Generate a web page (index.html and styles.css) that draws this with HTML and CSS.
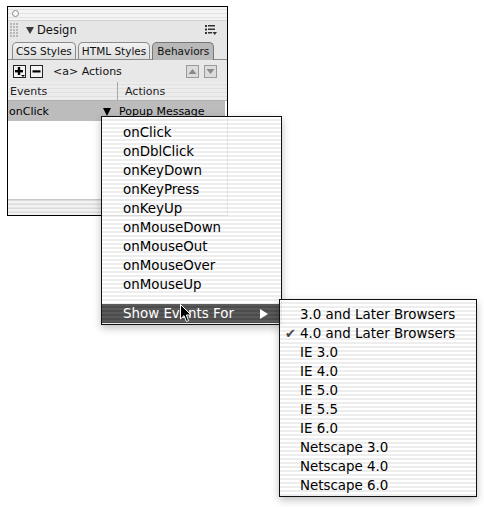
FILE: index.html
```html
<!DOCTYPE html>
<html>
<head>
<meta charset="utf-8">
<link rel="stylesheet" href="styles.css">
</head>
<body>
<div class="page">
  <div class="panel">
    <div class="titlebar"><span class="closebtn"></span></div>
    <div class="designrow">
      <span class="grip"></span>
      <span class="tri-down"></span>
      <span class="design-label">Design</span>
      <svg class="opts" width="12" height="10" viewBox="0 0 12 10">
        <rect x="0" y="0" width="2" height="2" fill="#333"/>
        <rect x="3" y="0" width="7" height="1.5" fill="#333"/>
        <rect x="0" y="3.5" width="2" height="2" fill="#333"/>
        <rect x="3" y="3.5" width="7" height="1.5" fill="#333"/>
        <rect x="0" y="7" width="2" height="2" fill="#333"/>
        <rect x="3" y="7" width="4" height="1.5" fill="#333"/>
        <path d="M7.5 7 L12 7 L9.75 10 Z" fill="#333"/>
      </svg>
    </div>
    <div class="tabs">
      <div class="tab">CSS Styles</div>
      <div class="tab">HTML Styles</div>
      <div class="tab active">Behaviors</div>
    </div>
    <div class="toolbar">
      <span class="tbtn plus">
        <svg width="11" height="11" viewBox="0 0 11 11"><rect x="1" y="4" width="8" height="2.4" fill="#000"/><rect x="3.8" y="1" width="2.4" height="8" fill="#000"/><path d="M7 9 L11 9 L9 11 Z" fill="#000"/></svg>
      </span>
      <span class="tbtn minus">
        <svg width="11" height="11" viewBox="0 0 11 11"><rect x="1.5" y="4.3" width="8" height="2.2" fill="#000"/></svg>
      </span>
      <span class="tag-label">&lt;a&gt; Actions</span>
      <span class="spacer"></span>
      <span class="abtn"><svg width="11" height="11" viewBox="0 0 11 11"><path d="M1.5 8 L9.5 8 L5.5 3 Z" fill="#8a8a8a"/></svg></span>
      <span class="abtn"><svg width="11" height="11" viewBox="0 0 11 11"><path d="M1.5 3 L9.5 3 L5.5 8 Z" fill="#8a8a8a"/></svg></span>
    </div>
    <div class="header">
      <div class="col-events">Events</div>
      <div class="col-actions">Actions</div>
    </div>
    <div class="row-sel">
      <div class="col-events">onClick<span class="row-tri"></span></div>
      <div class="col-actions">Popup Message</div>
    </div>
    <div class="list-area"></div>
    <div class="statusbar"></div>
  </div>

  <div class="menu menu-events">
    <div class="mi">onClick</div>
    <div class="mi">onDblClick</div>
    <div class="mi">onKeyDown</div>
    <div class="mi">onKeyPress</div>
    <div class="mi">onKeyUp</div>
    <div class="mi">onMouseDown</div>
    <div class="mi">onMouseOut</div>
    <div class="mi">onMouseOver</div>
    <div class="mi">onMouseUp</div>
    <div class="msep"></div>
    <div class="mi hl">Show Events For<span class="sub-tri"></span></div>
  </div>

  <div class="menu menu-browsers">
    <div class="mi">3.0 and Later Browsers</div>
    <div class="mi"><span class="check">✔</span>4.0 and Later Browsers</div>
    <div class="mi">IE 3.0</div>
    <div class="mi">IE 4.0</div>
    <div class="mi">IE 5.0</div>
    <div class="mi">IE 5.5</div>
    <div class="mi">IE 6.0</div>
    <div class="mi">Netscape 3.0</div>
    <div class="mi">Netscape 4.0</div>
    <div class="mi">Netscape 6.0</div>
  </div>

  <svg class="cursor" width="12" height="19" viewBox="0 0 12 19">
    <path d="M0.5 0.5 L0.5 15 L4 11.6 L6.4 17.5 L8.6 16.6 L6.3 11 L11 11 Z" fill="#000" stroke="#fff" stroke-width="1"/>
  </svg>
</div>
</body>
</html>
```

FILE: styles.css
```css
html, body {
  margin: 0;
  padding: 0;
  background: #fff;
}
.page {
  position: relative;
  width: 484px;
  height: 507px;
  box-sizing: border-box;
  padding: 6px 0 0 7px;
  font-family: "DejaVu Sans", "Liberation Sans", sans-serif;
  color: #000;
}
.panel {
  width: 219px;
  border: 1px solid #000;
  background: #fff;
  display: flex;
  flex-direction: column;
  font-size: 11px;
}
.titlebar {
  height: 13px;
  background: repeating-linear-gradient(to bottom, #f4f4f4 0 2px, #e2e2e2 2px 3px, #f4f4f4 3px 4px);
  display: flex;
  align-items: center;
  padding-left: 4px;
}
.closebtn {
  width: 5px;
  height: 5px;
  border: 1px solid #8c8c8c;
  border-radius: 50%;
  background: #fafafa;
}
.designrow {
  height: 19px;
  background: #e6e6e6;
  display: flex;
  align-items: center;
  border-top: 1px solid #d0d0d0;
  box-sizing: border-box;
}
.grip {
  width: 9px;
  height: 15px;
  margin-left: 2px;
  background-image: radial-gradient(circle at 1px 1px, #b8b8b8 0.9px, transparent 1.1px);
  background-size: 3px 3px;
}
.tri-down {
  width: 0;
  height: 0;
  margin-left: 7px;
  border-left: 4px solid transparent;
  border-right: 4px solid transparent;
  border-top: 7px solid #3a3a3a;
}
.design-label {
  margin-left: 3px;
  font-size: 11.5px;
  color: #111;
}
.opts {
  margin-left: auto;
  margin-right: 10px;
}
.tabs {
  height: 21px;
  background: #e6e6e6;
  display: flex;
  align-items: flex-end;
  gap: 2px;
  padding-left: 4px;
  border-bottom: 1px solid #8a8a8a;
  box-sizing: border-box;
}
.tab {
  height: 16px;
  padding: 0 3px;
  border: 1px solid #8a8a8a;
  border-bottom: none;
  border-radius: 5px 5px 0 0;
  background: linear-gradient(to bottom, #f2f2f2, #dedede);
  font-size: 10.5px;
  line-height: 17px;
  color: #111;
  white-space: nowrap;
}
.tab.active {
  padding: 0 4px;
  background: #b9b9b9;
  border-color: #777;
  margin-bottom: -1px;
  height: 17px;
}
.toolbar {
  height: 22px;
  background: #e8e8e8;
  display: flex;
  align-items: center;
  padding: 1px 10px 0 5px;
  box-sizing: border-box;
}
.tbtn {
  width: 11px;
  height: 11px;
  border: 1px solid #222;
  background: #f4f4f4;
  display: flex;
}
.tbtn.minus { margin-left: 4px; }
.tag-label {
  margin-left: 10px;
  font-size: 11px;
  color: #111;
}
.spacer { flex: 1; }
.abtn {
  width: 11px;
  height: 11px;
  border: 1px solid #9a9a9a;
  background: #dcdcdc;
  display: flex;
  margin-left: 5px;
}
.header {
  height: 18px;
  display: flex;
  background: repeating-linear-gradient(to bottom, #ececec 0 2px, #e0e0e0 2px 3px, #ececec 3px 4px);
  border-bottom: 1px solid #b0b0b0;
  color: #222;
}
.col-events {
  width: 107px;
  padding-left: 2px;
  line-height: 20px;
  position: relative;
}
.header .col-events {
  border-right: 1px solid #a8a8a8;
}
.col-actions {
  padding-left: 7px;
  line-height: 20px;
}
.row-sel {
  height: 20px;
  display: flex;
  background: #bcbcbc;
  margin-right: 2px;
}
.row-sel .col-events {
  width: 108px;
  padding-left: 1px;
  line-height: 21px;
}
.row-sel .col-actions {
  padding-left: 2px;
  line-height: 21px;
}
.row-tri {
  position: absolute;
  left: 95px;
  top: 7px;
  width: 0;
  height: 0;
  border-left: 4px solid transparent;
  border-right: 4px solid transparent;
  border-top: 8px solid #000;
}
.list-area {
  height: 78px;
}
.statusbar {
  height: 16px;
  background: repeating-linear-gradient(to bottom, #dcdcdc 0 1px, #f2f2f2 1px 3px, #e6e6e6 3px 4px);
  border-top: 1px solid #c8c8c8;
  box-sizing: border-box;
}
.menu {
  position: absolute;
  border: 1px solid #111;
  background: repeating-linear-gradient(to bottom, rgba(255,255,255,0.93) 0 2px, rgba(236,236,236,0.93) 2px 4px);
  font-size: 13.4px;
  box-sizing: border-box;
  box-shadow: 0 3px 8px rgba(0,0,0,0.25);
}
.menu-events {
  left: 101px;
  top: 116px;
  width: 181px;
  height: 209px;
  padding-top: 6px;
}
.menu-browsers {
  left: 279px;
  top: 299px;
  width: 198px;
  height: 198px;
  padding-top: 5px;
}
.mi {
  height: 19px;
  line-height: 19px;
  padding-left: 21px;
  position: relative;
  white-space: nowrap;
}
.menu-browsers .mi { padding-left: 20px; }
.msep { height: 10px; }
.mi.hl {
  color: #fff;
  background: repeating-linear-gradient(to bottom, #5a5a5a 0 2px, #4c4c4c 2px 4px);
}
.sub-tri {
  position: absolute;
  left: 158px;
  top: 5px;
  width: 0;
  height: 0;
  border-top: 5px solid transparent;
  border-bottom: 5px solid transparent;
  border-left: 8px solid #fff;
}
.check {
  position: absolute;
  left: 5px;
  top: 0;
  font-size: 13px;
  color: #444;
}
.cursor {
  position: absolute;
  left: 180px;
  top: 304px;
}
```
